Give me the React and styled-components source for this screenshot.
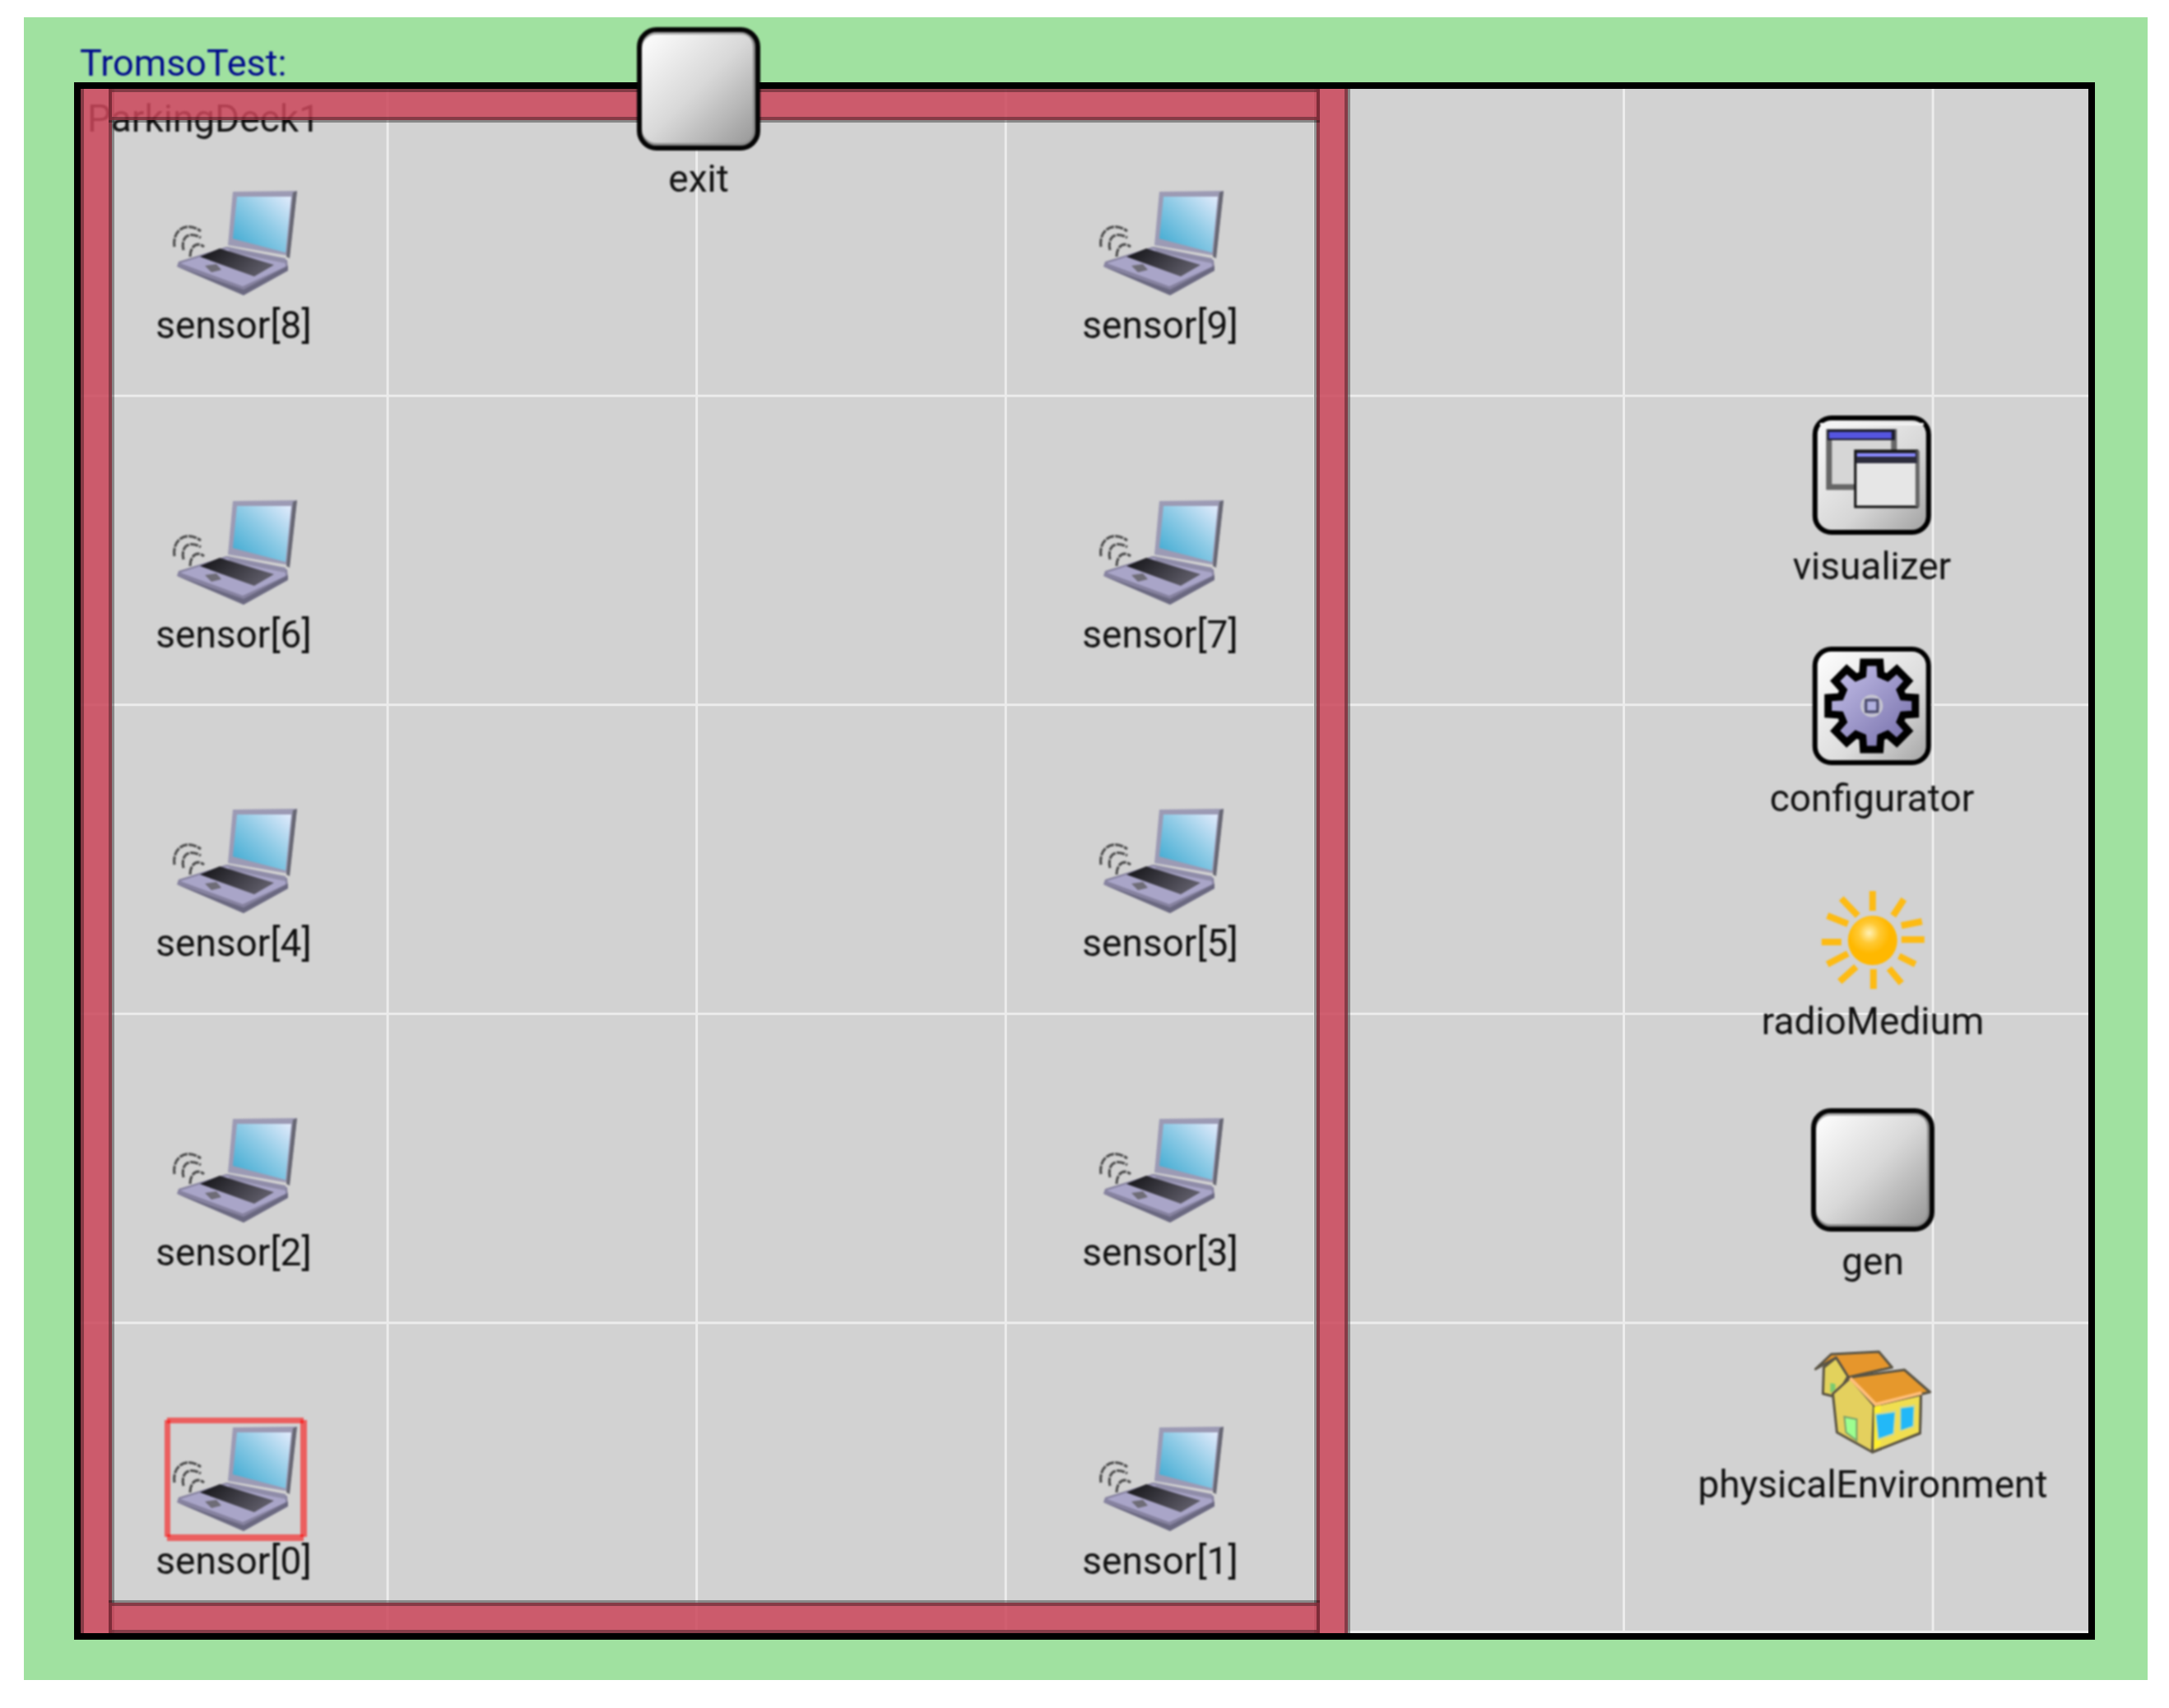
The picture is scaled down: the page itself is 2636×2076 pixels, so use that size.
import React from "react";
import styled, { createGlobalStyle } from "styled-components";

const GlobalStyle = createGlobalStyle`
  html, body {
    margin: 0;
    padding: 0;
    background: #fff;
  }
`;

const GRID = 375.6;

const Sheet = styled.div`
  box-sizing: border-box;
  width: 2581px;
  height: 2021px;
  margin: 21px 0 0 29px;
  padding: 0 64px 49px 61px;
  display: flex;
  flex-direction: column;
  background: #a0e1a0;
`;

const Title = styled.div`
  flex: none;
  height: 79px;
  box-sizing: border-box;
  padding: 32px 0 0 7px;
  font: 45px/48px Roboto, sans-serif;
  color: #000a8c;
  filter: blur(0.8px);
`;

const Canvas = styled.div`
  flex: 1;
  position: relative;
  border: 8px solid #000;
  background-color: #d2d2d2;
  background-image:
    linear-gradient(to left, #ececec 3px, transparent 3px),
    linear-gradient(to top, #ececec 3px, transparent 3px);
  background-size: ${GRID}px ${GRID}px;
  background-position: -1px -1px;
`;

const Deck = styled.div`
  position: absolute;
  left: 0;
  top: 0;
  width: 1543px;
  height: 1877px;
  overflow: hidden;
`;

const DeckLabel = styled.div`
  position: absolute;
  left: 8px;
  top: 12px;
  font: 46px/48px Roboto, sans-serif;
  color: #111;
  filter: blur(0.8px);
`;

// walls of the parking deck, translucent so the grid and label show through
const Wall = styled.div`
  position: absolute;
  left: ${(p) => p.$x}px;
  top: ${(p) => p.$y}px;
  width: ${(p) => p.$w}px;
  height: ${(p) => p.$h}px;
  background: rgba(203, 71, 90, 0.85);
  box-shadow: ${(p) =>
    p.$flat
      ? "0 3px 0 rgba(0, 0, 0, 0.35), 0 -3px 0 rgba(0, 0, 0, 0.35)"
      : "0 0 0 3px rgba(0, 0, 0, 0.35)"},
    inset 0 0 0 4px rgba(0, 0, 0, 0.35);
`;

const Node = styled.div`
  position: absolute;
  left: ${(p) => p.$x - 97}px;
  top: ${(p) => p.$y - 108}px;
  transform: translateX(-50%);
  display: flex;
  flex-direction: column;
  align-items: center;
`;

const IconWrap = styled.div`
  position: relative;
  display: flex;
  filter: blur(0.9px);
`;

const Label = styled.div`
  margin-top: ${(p) => p.$gap || 0}px;
  font: 46px/48px Roboto, sans-serif;
  color: #111;
  white-space: nowrap;
  filter: blur(0.8px);
`;

const PlainBox = styled.div`
  box-sizing: border-box;
  width: 150px;
  height: 150px;
  border: 6px solid #050505;
  border-radius: 24px;
  background: linear-gradient(135deg, #ffffff 0%, #d8d8d8 50%, #969696 100%);
  box-shadow: inset -3px 0 0 #8a8a8a, inset 0 3px 0 #a8a8a8, inset 0 -3px 0 #8a8a8a;
`;

const Selection = styled.svg`
  position: absolute;
  left: 11px;
  top: 11px;
`;

const Laptop = () => (
  <svg width="190" height="161" viewBox="-2 0 190 161">
    <defs>
      <linearGradient id="lapScreen" x1="0" y1="1" x2="1" y2="0">
        <stop offset="0" stopColor="#35a6cf" />
        <stop offset="0.55" stopColor="#8fcbe6" />
        <stop offset="1" stopColor="#e2ebfc" />
      </linearGradient>
      <linearGradient id="lapKeys" x1="0" y1="0" x2="1" y2="0.4">
        <stop offset="0" stopColor="#111114" />
        <stop offset="1" stopColor="#5c5a66" />
      </linearGradient>
    </defs>
    <polygon points="92,23 170,22 161,100 155,100 86,88" fill="#9c9ab4" />
    <polygon points="165,24 170,22 161,104 157,102" fill="#666672" />
    <polygon points="97,29 163,29 156,97 92,80" fill="url(#lapScreen)" />
    <polygon points="84,90 158,106 159,117 105,148 24,114 26,108" fill="#86829f" />
    <polygon points="84,92 156,106 156,114 104,138 28,110" fill="#a9a5c8" />
    <polygon points="24,114 105,142 159,113 159,119 105,149" fill="#6a6880" />
    <polygon points="86,90 156,104 156,110 88,96" fill="#8f8ca8" />
    <polygon points="52,102 76,92 142,112 118,126" fill="url(#lapKeys)" />
    <polygon points="58,113 72,111 78,118 66,121" fill="#6e6c76" />
    <g fill="none" stroke="#4e4e4e" strokeWidth="3.2" strokeDasharray="10 1.4">
      <path d="M21 90 C18 70 35 58 53 71" />
      <path d="M32 94 C28 77 40 71 53 79" />
      <path d="M40 102 C40 90 48 83 57 90" />
    </g>
  </svg>
);

const Visualizer = () => (
  <svg width="150" height="150" viewBox="50 22 150 150">
    <defs>
      <linearGradient id="visBox" x1="0" y1="0" x2="1" y2="1">
        <stop offset="0" stopColor="#fafafa" />
        <stop offset="0.6" stopColor="#d6d6d6" />
        <stop offset="1" stopColor="#a0a0a0" />
      </linearGradient>
    </defs>
    <rect x="56" y="28" width="138" height="139" rx="20" fill="url(#visBox)" stroke="#000" strokeWidth="6" />
    <rect x="62" y="34" width="126" height="3" fill="#f4f4f4" />
    <rect x="73" y="45" width="79" height="67" fill="#d6d6d6" stroke="#666" strokeWidth="7" />
    <rect x="71" y="42" width="82" height="13" fill="#1a1a2a" />
    <rect x="73" y="45" width="76" height="8" fill="#5555e0" />
    <rect x="105" y="68" width="75" height="68" fill="#e6e6e6" stroke="#111" strokeWidth="3" />
    <rect x="178" y="68" width="5" height="68" fill="#666" />
    <rect x="106" y="69" width="74" height="14" fill="#2c2c3c" />
    <rect x="107" y="71" width="71" height="4" fill="#8a8aff" />
  </svg>
);

const gearPath = () => {
  const cx = 125;
  const cy = 98;
  const pts = [];
  for (let i = 0; i < 8; i++) {
    const a = (i * Math.PI) / 4 - Math.PI / 2;
    const ux = Math.cos(a);
    const uy = Math.sin(a);
    const at = (r, w) => `${(cx + ux * r - uy * w).toFixed(1)},${(cy + uy * r + ux * w).toFixed(1)}`;
    pts.push(at(38, -11), at(53, -10), at(53, 10), at(38, 11));
  }
  return pts.join(" ");
};

const Configurator = () => (
  <svg width="150" height="150" viewBox="50 22 150 150">
    <defs>
      <linearGradient id="cfgBox" x1="0" y1="0" x2="1" y2="1">
        <stop offset="0" stopColor="#ffffff" />
        <stop offset="0.6" stopColor="#dcdcdc" />
        <stop offset="1" stopColor="#a4a4a4" />
      </linearGradient>
      <linearGradient id="cfgGear" x1="0" y1="0" x2="1" y2="1">
        <stop offset="0" stopColor="#c8c4ec" />
        <stop offset="1" stopColor="#716aa6" />
      </linearGradient>
    </defs>
    <rect x="56" y="29" width="138" height="138" rx="20" fill="url(#cfgBox)" stroke="#000" strokeWidth="6" />
    <polygon points={gearPath()} fill="url(#cfgGear)" stroke="#000" strokeWidth="9" strokeLinejoin="miter" />
    <circle cx="125" cy="98" r="12" fill="#a8a4cc" stroke="#c8c8d0" strokeWidth="3" />
    <rect x="118" y="91" width="14" height="14" fill="#b0b0e0" stroke="#4a4a6a" strokeWidth="3" />
  </svg>
);

const rays = [
  [125, 23, 125, 47],
  [163, 33, 150, 53],
  [185, 60, 160, 65],
  [188, 82, 160, 82],
  [177, 112, 157, 102],
  [160, 135, 145, 117],
  [126, 142, 126, 118],
  [85, 133, 105, 115],
  [70, 112, 95, 99],
  [63, 85, 87, 85],
  [70, 53, 95, 63],
  [87, 32, 107, 53],
];

const Sun = () => (
  <svg width="260" height="157" viewBox="-5 0 260 157">
    <defs>
      <radialGradient id="sunDisc" cx="0.43" cy="0.35" r="0.6">
        <stop offset="0" stopColor="#fff2b8" />
        <stop offset="0.35" stopColor="#ffc933" />
        <stop offset="0.7" stopColor="#ffb800" />
      </radialGradient>
    </defs>
    {rays.map(([x1, y1, x2, y2], i) => (
      <line key={i} x1={x1} y1={y1} x2={x2} y2={y2} stroke="#fdbb14" strokeWidth="8" />
    ))}
    <circle cx="125" cy="83" r="30" fill="url(#sunDisc)" />
  </svg>
);

const House = () => (
  <svg width="150" height="127" viewBox="160 30 150 127">
    <g stroke="#5a5444" strokeWidth="3" strokeLinejoin="round">
      <polygon points="175,52 190,40 205,62 190,88 174,84" fill="#e2d25c" />
      <polygon points="184,36 242,33 258,52 205,64 190,40 165,54" fill="#e6962c" />
      <polygon points="207,65 186,84 191,131 234,155 292,132 293,85 236,98" fill="#e4d05e" />
      <polygon points="236,98 293,85 292,132 234,155" fill="#f0de50" />
      <polygon points="207,64 273,55 304,82 238,98" fill="#e6982c" />
    </g>
    <polyline points="207,65 238,97 294,83" fill="none" stroke="#ffbe78" strokeWidth="4" />
    <polygon points="236,100 244,98 244,146 236,151" fill="#fff02c" />
    <polygon points="237,108 263,104 261,134 240,141" fill="#c8d8a0" />
    <polygon points="267,100 286,97 285,125 267,130" fill="#c8d8a0" />
    <polygon points="239,110 261,107 259,132 242,138" fill="#22b8f8" />
    <polygon points="269,102 284,100 283,123 269,128" fill="#22b8f8" />
    <polygon points="200,112 215,115 215,141 202,131" fill="#9cff90" stroke="#7aa06a" strokeWidth="2" />
    <polygon points="183,71 189,72 189,79 183,83" fill="#7acb70" />
  </svg>
);

const sensors = [8, 9, 6, 7, 4, 5, 2, 3, 0, 1].map((id, i) => ({
  id,
  x: i % 2 === 0 ? 283 : 1409,
  y: 210 + Math.floor(i / 2) * GRID,
}));

const App = () => (
  <>
    <GlobalStyle />
    <Sheet>
      <Title>TromsoTest:</Title>
      <Canvas>
        <Deck>
          <DeckLabel>ParkingDeck1</DeckLabel>
          <Wall $x={0} $y={-6} $w={38} $h={1890} />
          <Wall $x={1502} $y={-6} $w={38} $h={1890} />
          <Wall $flat $x={34} $y={0} $w={1472} $h={38} />
          <Wall $flat $x={34} $y={1840} $w={1472} $h={37} />
        </Deck>

        <Node $x={848} $y={33}>
          <IconWrap><PlainBox /></IconWrap>
          <Label $gap={10}>exit</Label>
        </Node>

        {sensors.map((s) => (
          <Node key={s.id} $x={s.x} $y={s.y}>
            <IconWrap>
              <Laptop />
              {s.id === 0 && (
                <Selection width="173" height="150">
                  <g fill="rgba(255, 0, 0, 0.55)">
                    <rect x="3" y="0" width="166" height="7" />
                    <rect x="3" y="142" width="166" height="8" />
                    <rect x="0" y="3" width="7" height="142" />
                    <rect x="165" y="3" width="8" height="142" />
                  </g>
                </Selection>
              )}
            </IconWrap>
            <Label>sensor[{s.id}]</Label>
          </Node>
        ))}

        <Node $x={2274} $y={502}>
          <IconWrap><Visualizer /></IconWrap>
          <Label $gap={12}>visualizer</Label>
        </Node>
        <Node $x={2274} $y={782}>
          <IconWrap><Configurator /></IconWrap>
          <Label $gap={14}>configurator</Label>
        </Node>
        <Node $x={2275} $y={1060}>
          <IconWrap><Sun /></IconWrap>
          <Label>radioMedium</Label>
        </Node>
        <Node $x={2275} $y={1347}>
          <IconWrap><PlainBox /></IconWrap>
          <Label $gap={12}>gen</Label>
        </Node>
        <Node $x={2275} $y={1640}>
          <IconWrap><House /></IconWrap>
          <Label $gap={13}>physicalEnvironment</Label>
        </Node>
      </Canvas>
    </Sheet>
  </>
);

export default App;
